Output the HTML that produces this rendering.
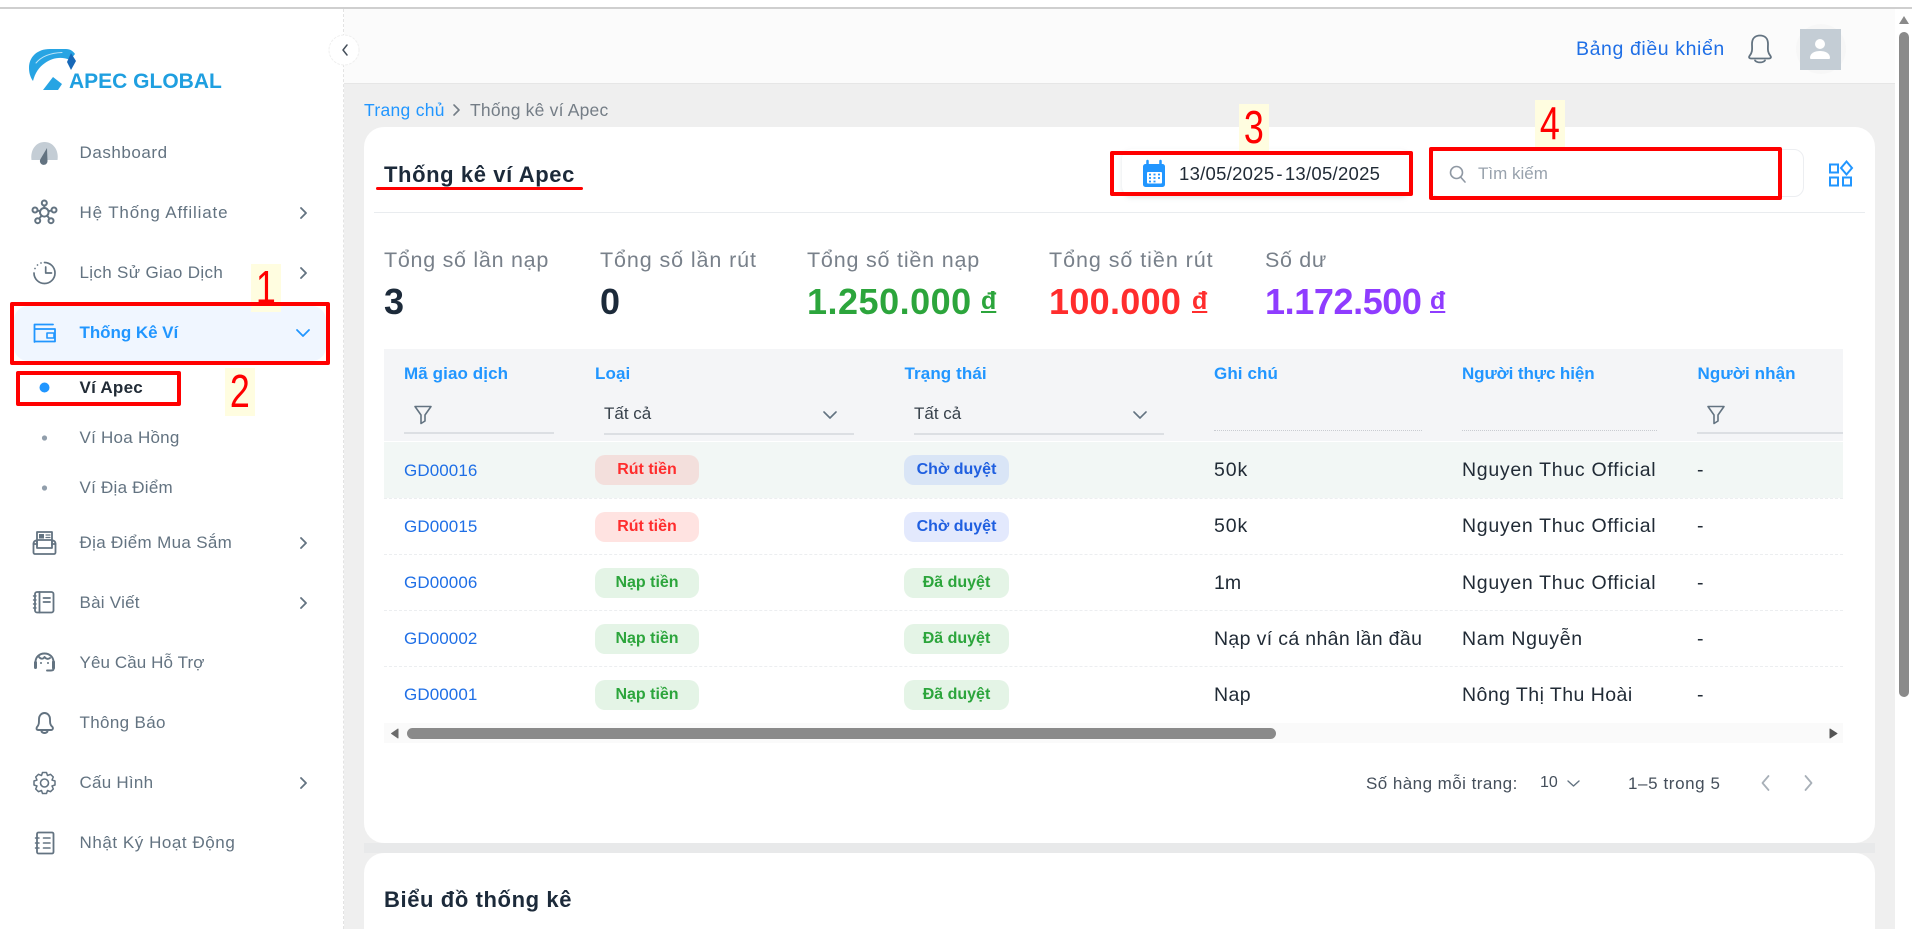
<!DOCTYPE html>
<html lang="vi"><head><meta charset="utf-8"><title>Thống kê ví Apec</title>
<style>
html,body{margin:0;padding:0;width:1912px;height:929px;overflow:hidden;background:#fff;font-family:"Liberation Sans","DejaVu Sans",sans-serif}
.a{position:absolute}
.t{position:absolute;white-space:nowrap;line-height:24px;height:24px}
.nav{font-size:17px;color:#637381;letter-spacing:.25px}
.lb{font-size:21.5px;color:#78808a;letter-spacing:.65px}
.val{font-size:36px;font-weight:700;letter-spacing:.3px;line-height:44px;height:44px}
.cur{font-size:25px;font-weight:700;text-decoration:underline;line-height:30px;height:30px}
.th{font-size:17px;font-weight:700;color:#2196ff;letter-spacing:.1px}
.gd{font-size:17px;color:#1f6fe6;letter-spacing:.1px}
.c{font-size:19.5px;color:#212b36;letter-spacing:.4px}
.bd{position:absolute;height:30px;border-radius:10px;font-size:16px;font-weight:700;line-height:30px;text-align:center;white-space:nowrap}
.r{background:#ffe3e1;color:#ff2d2d}.b{background:#e3e9fd;color:#1f5fe0}.g{background:#e4f4e6;color:#2ca53c}
.ln{position:absolute;height:0;border-top:2px solid #dcdfe3}
.dot{position:absolute;height:0;border-top:1px dotted #c9ccd1}
.n{position:absolute;width:30px;height:48px;background:#fffde0;color:#f00;font-size:46px;line-height:46px;text-align:center}
.n span{display:inline-block;transform:scaleX(.78)}
.rect{position:absolute;box-sizing:border-box;border:4px solid #f00;border-radius:2px}
.sep{position:absolute;left:384px;width:1459px;border-top:1px dashed #eceef0}
</style></head><body>
<!-- base -->
<div class="a" style="left:0;top:7px;width:1912px;height:2px;background:#cfcfcf"></div>
<div class="a" style="left:344px;top:9px;width:1551px;height:920px;background:#efefef"></div>
<div class="a" style="left:344px;top:9px;width:1551px;height:74px;background:#fbfbfb;border-bottom:1px solid #e6e6e6"></div>
<div class="a" style="left:343px;top:9px;height:920px;border-left:1px dashed #e3e3e3"></div>
<div class="a" style="left:364px;top:843px;width:1511px;height:10px;background:#e8e9ea"></div>

<!-- sidebar -->
<div class="a" style="left:14px;top:306px;width:312px;height:55px;background:#f0f6ff;border-radius:14px"></div>
<div class="t" style="left:69px;top:70px;font-size:21px;font-weight:700;color:#1f9fe0">APEC GLOBAL</div>
<div class="t nav" style="left:79.5px;top:141px;letter-spacing:.55px">Dashboard</div>
<div class="t nav" style="left:79.5px;top:201px;letter-spacing:.85px">Hệ Thống Affiliate</div>
<div class="t nav" style="left:79.5px;top:261px;letter-spacing:.33px">Lịch Sử Giao Dịch</div>
<div class="t nav" style="left:79.5px;top:321px;color:#2196ff;font-weight:700;letter-spacing:-.05px">Thống Kê Ví</div>
<div class="t nav" style="left:79.5px;top:376px;color:#212b36;font-weight:700">Ví Apec</div>
<div class="t nav" style="left:79.5px;top:426px">Ví Hoa Hồng</div>
<div class="t nav" style="left:79.5px;top:476px">Ví Địa Điểm</div>
<div class="t nav" style="left:79.5px;top:531px;letter-spacing:.33px">Địa Điểm Mua Sắm</div>
<div class="t nav" style="left:79.5px;top:591px">Bài Viết</div>
<div class="t nav" style="left:79.5px;top:651px;letter-spacing:.1px">Yêu Cầu Hỗ Trợ</div>
<div class="t nav" style="left:79.5px;top:711px;letter-spacing:.35px">Thông Báo</div>
<div class="t nav" style="left:79.5px;top:771px">Cấu Hình</div>
<div class="t nav" style="left:79.5px;top:831px;letter-spacing:.55px">Nhật Ký Hoạt Động</div>

<!-- header -->
<div class="t" style="left:1576px;top:37px;font-size:19.5px;color:#1f6fe6;letter-spacing:.6px">Bảng điều khiển</div>
<div class="a" style="left:1796px;top:24px;width:50px;height:50px;border-radius:50%;background:#f7f7f7"></div>
<div class="a" style="left:1800px;top:29px;width:41px;height:41px;background:#c4cdd5"></div>

<!-- breadcrumb -->
<div class="t" style="left:364px;top:98px;font-size:17.5px;color:#2196ff;letter-spacing:.3px">Trang chủ</div>
<div class="t" style="left:470px;top:98px;font-size:17.5px;color:#747d86;letter-spacing:.2px">Thống kê ví Apec</div>

<!-- card 1 -->
<div class="a" style="left:364px;top:127px;width:1511px;height:716px;background:#fff;border-radius:20px"></div>
<div class="a" style="left:364px;top:853px;width:1511px;height:76px;background:#fff;border-radius:20px 20px 0 0"></div>
<div class="t" style="left:384px;top:163px;font-size:22px;font-weight:700;color:#1c2a3a;letter-spacing:.6px">Thống kê ví Apec</div>
<div class="a" style="left:376px;top:187px;width:207px;height:3px;background:#f00;border-radius:2px"></div>
<div class="a" style="left:374px;top:212px;width:1491px;height:1px;background:#e9ecef"></div>

<div class="a" style="left:1122px;top:149px;width:288px;height:47px;background:#fff;border-radius:10px;box-shadow:0 2px 5px rgba(145,158,171,.25)"></div>
<div class="t" style="left:1179px;top:162px;font-size:18.5px;color:#212b36;letter-spacing:.28px">13/05/2025<span style="margin:0 2px">-</span>13/05/2025</div>
<div class="a" style="left:1429px;top:149px;width:375px;height:48px;box-sizing:border-box;border:1px solid #eceef1;border-radius:10px"></div>
<div class="t" style="left:1478px;top:162px;font-size:17px;color:#98a2ad">Tìm kiếm</div>

<!-- stats -->
<div class="t lb" style="left:384px;top:248px;letter-spacing:.72px">Tổng số lần nạp</div>
<div class="t lb" style="left:600px;top:248px;letter-spacing:.9px">Tổng số lần rút</div>
<div class="t lb" style="left:807px;top:248px;letter-spacing:.8px">Tổng số tiền nạp</div>
<div class="t lb" style="left:1049px;top:248px;letter-spacing:.95px">Tổng số tiền rút</div>
<div class="t lb" style="left:1265px;top:248px">Số dư</div>
<div class="t val" style="left:384px;top:280px;color:#1c2a3a">3</div>
<div class="t val" style="left:600px;top:280px;color:#1c2a3a">0</div>
<div class="t val" style="left:807px;top:280px;color:#2ca53c;letter-spacing:.5px">1.250.000</div>
<div class="t cur" style="left:981px;top:286px;color:#2ca53c">đ</div>
<div class="t val" style="left:1049px;top:280px;color:#ff2d2d">100.000</div>
<div class="t cur" style="left:1192px;top:286px;color:#ff2d2d">đ</div>
<div class="t val" style="left:1265px;top:280px;color:#8f3cff;letter-spacing:-.4px">1.172.500</div>
<div class="t cur" style="left:1430px;top:286px;color:#8f3cff">đ</div>

<!-- table -->
<div class="a" style="left:384px;top:349px;width:1459px;height:92px;background:#f4f5f7"></div>
<div class="a" style="left:384px;top:442px;width:1459px;height:56px;background:#f2f7f5"></div>
<div class="sep" style="top:498px"></div><div class="sep" style="top:554px"></div><div class="sep" style="top:610px"></div><div class="sep" style="top:666px"></div>
<div class="t th" style="left:404px;top:362px">Mã giao dịch</div>
<div class="t th" style="left:595px;top:362px">Loại</div>
<div class="t th" style="left:904.5px;top:362px">Trạng thái</div>
<div class="t th" style="left:1214px;top:362px">Ghi chú</div>
<div class="t th" style="left:1462px;top:362px;letter-spacing:-.1px">Người thực hiện</div>
<div class="t th" style="left:1697.5px;top:362px">Người nhận</div>
<div class="t" style="left:604px;top:402px;font-size:17px;color:#37414b">Tất cả</div>
<div class="t" style="left:914px;top:402px;font-size:17px;color:#37414b">Tất cả</div>
<div class="ln" style="left:404px;top:432px;width:150px"></div>
<div class="ln" style="left:604px;top:433px;width:250px"></div>
<div class="ln" style="left:914px;top:433px;width:250px"></div>
<div class="dot" style="left:1214px;top:430px;width:208px"></div>
<div class="dot" style="left:1462px;top:430px;width:195px"></div>
<div class="ln" style="left:1697px;top:432px;width:146px"></div>

<div class="t gd" style="left:404px;top:459px">GD00016</div>
<div class="t gd" style="left:404px;top:515px">GD00015</div>
<div class="t gd" style="left:404px;top:571px">GD00006</div>
<div class="t gd" style="left:404px;top:627px">GD00002</div>
<div class="t gd" style="left:404px;top:683px">GD00001</div>

<div class="bd" style="left:595px;top:455px;width:104px;background:#f3dfdc;color:#ff2d2d">Rút tiền</div>
<div class="bd r" style="left:595px;top:512px;width:104px">Rút tiền</div>
<div class="bd g" style="left:595px;top:568px;width:104px">Nạp tiền</div>
<div class="bd g" style="left:595px;top:624px;width:104px">Nạp tiền</div>
<div class="bd g" style="left:595px;top:680px;width:104px">Nạp tiền</div>
<div class="bd" style="left:904px;top:455px;width:105px;background:#d9e5f6;color:#1f5fe0">Chờ duyệt</div>
<div class="bd b" style="left:904px;top:512px;width:105px">Chờ duyệt</div>
<div class="bd g" style="left:904px;top:568px;width:105px">Đã duyệt</div>
<div class="bd g" style="left:904px;top:624px;width:105px">Đã duyệt</div>
<div class="bd g" style="left:904px;top:680px;width:105px">Đã duyệt</div>

<div class="t c" style="left:1214px;top:458px;letter-spacing:.9px">50k</div>
<div class="t c" style="left:1214px;top:514px;letter-spacing:.9px">50k</div>
<div class="t c" style="left:1214px;top:571px;letter-spacing:0">1m</div>
<div class="t c" style="left:1214px;top:627px;letter-spacing:.35px">Nạp ví cá nhân lần đầu</div>
<div class="t c" style="left:1214px;top:683px">Nap</div>
<div class="t c" style="left:1462px;top:458px;letter-spacing:.7px">Nguyen Thuc Official</div>
<div class="t c" style="left:1462px;top:514px;letter-spacing:.7px">Nguyen Thuc Official</div>
<div class="t c" style="left:1462px;top:571px;letter-spacing:.7px">Nguyen Thuc Official</div>
<div class="t c" style="left:1462px;top:627px;letter-spacing:.7px">Nam Nguyễn</div>
<div class="t c" style="left:1462px;top:683px;letter-spacing:.45px">Nông Thị Thu Hoài</div>
<div class="t c" style="left:1697px;top:458px">-</div>
<div class="t c" style="left:1697px;top:514px">-</div>
<div class="t c" style="left:1697px;top:571px">-</div>
<div class="t c" style="left:1697px;top:627px">-</div>
<div class="t c" style="left:1697px;top:683px">-</div>

<!-- table scrollbar -->
<div class="a" style="left:384px;top:723px;width:1459px;height:20px;background:#fafafa"></div>
<div class="a" style="left:407px;top:728px;width:869px;height:11px;background:#8a8a8a;border-radius:6px"></div>

<!-- pagination -->
<div class="t" style="left:1366px;top:772px;font-size:17px;color:#454f5b;letter-spacing:.45px">Số hàng mỗi trang:</div>
<div class="t" style="left:1540px;top:771px;font-size:16px;color:#454f5b">10</div>
<div class="t" style="left:1628px;top:772px;font-size:17px;color:#454f5b;letter-spacing:.6px">1–5 trong 5</div>

<!-- card 2 -->
<div class="t" style="left:384px;top:888px;font-size:22px;font-weight:700;color:#1c2a3a;letter-spacing:.6px">Biểu đồ thống kê</div>

<!-- window scrollbar -->
<div class="a" style="left:1899px;top:32px;width:10px;height:665px;background:#8a8a8a;border-radius:5px"></div>

<!-- icons -->
<svg class="a" style="left:0;top:0" width="1912" height="929" viewBox="0 0 1912 929" fill="none" stroke-linecap="round" stroke-linejoin="round">
 <!-- logo -->
 <path d="M29 68C29 57 37 49 50 49L66 49C70 49 73 51 75 54L70 60C61 56 52 58 45 63C39 67 35 73 33 81C30 77 29 72 29 68Z" fill="#27a4e3"/>
 <path d="M36 63C41 57 49 53 62 52.500" stroke="#bfe4f7" stroke-width="1"/>
 <path d="M71 53L76 61L71 70L67 62Z" fill="#1768b8"/>
 <path d="M43 90L53 77L62 84L58 90Z" fill="#27a4e3"/>
 <!-- dashboard -->
 <path d="M31.500 160C30 150 36 142 44.500 142C53 142 59 150 57.500 160Z" fill="#c4cdd5"/>
 <path d="M47 148L40.500 159A3.800 3.800 0 1 0 47.500 161Z" fill="#637381"/>
 <!-- affiliate -->
 <g stroke="#637381" stroke-width="2">
  <circle cx="44.300" cy="212.300" r="4.300"/><circle cx="44.300" cy="203" r="2.500"/><circle cx="35" cy="210" r="2.500"/><circle cx="54" cy="210" r="2.500"/><circle cx="37.700" cy="220.700" r="2.500"/><circle cx="51" cy="220.700" r="2.500"/>
  <path d="M44.300 205.500V208M37.500 210.500L40 211.200M51.500 210.500L48.600 211.200M39.200 218.700L41.500 215.700M49.500 218.700L47.200 215.700"/>
 </g>
 <!-- clock -->
 <path d="M44.500 262.500A10.500 10.500 0 1 1 34 273" stroke="#637381" stroke-width="1.700"/>
 <path d="M35 268.500V268.500M37.500 265V265M41 263V263" stroke="#637381" stroke-width="1.700"/>
 <path d="M45.700 267V273H51.500" stroke="#637381" stroke-width="1.700"/>
 <!-- wallet -->
 <path d="M34.500 342V324.500H53M34.500 329H55V341.500H34.500" stroke="#2196ff" stroke-width="1.800"/>
 <rect x="47" y="333" width="7" height="5" stroke="#2196ff" stroke-width="1.600"/>
 <path d="M297 330L303 336L309 330" stroke="#2196ff" stroke-width="1.800"/>
 <!-- dots -->
 <circle cx="44.500" cy="387.500" r="5" fill="#2196ff"/>
 <circle cx="44.500" cy="438" r="2.600" fill="#919eab"/>
 <circle cx="44.500" cy="488" r="2.600" fill="#919eab"/>
 <!-- shop -->
 <g stroke="#637381" stroke-width="1.800">
  <path d="M37 540V532H52V540"/><path d="M37 540H52V545"/><path d="M37 540V545"/>
  <path d="M36 544H33.500V552.500A1.500 1.500 0 0 0 35 554H54A1.500 1.500 0 0 0 55.500 552.500V544H53"/>
  <path d="M33.500 544C33.500 541 36 540 37 541V548H52V541C53 540 55.500 541 55.500 544"/>
 </g>
 <rect x="39" y="534" width="5" height="4.500" fill="#637381"/><path d="M46 535H50M46 537.500H50" stroke="#637381" stroke-width="1.200"/>
 <!-- notebook -->
 <g stroke="#637381" stroke-width="1.800">
  <rect x="35" y="592" width="18.500" height="20.500" rx="2"/><path d="M39.500 592V612.500M43.500 598H50M43.500 602H50"/>
  <path d="M33.500 596H36M33.500 600H36M33.500 604H36M33.500 608H36" stroke-width="1.400"/>
 </g>
 <!-- headset -->
 <g stroke="#637381" stroke-width="1.900">
  <path d="M35.500 667V662C35.500 657 39.500 653.500 44.500 653.500C49.500 653.500 53.500 657 53.500 662V669C53.500 670 52.500 670.500 51 670.500H47"/>
  <path d="M39 657C41 659.500 43.500 659 44.500 657C46 659 48 659.500 50 658"/>
  <path d="M35.500 662.500V667.500M53.500 662V668" stroke-width="3"/>
 </g>
 <circle cx="41" cy="663" r="1" fill="#637381"/><circle cx="48" cy="663" r="1" fill="#637381"/>
 <!-- bell sidebar -->
 <path d="M37 727C39 725 39 723 39 719A5.500 6 0 0 1 50 719C50 723 50 725 52.500 727C53.500 728.500 52.500 730 51 730H38.500C36.500 730 36 728.500 37 727Z" stroke="#637381" stroke-width="1.900"/>
 <path d="M41.500 731.500C43 733.500 46 733.500 47.500 731.500" stroke="#637381" stroke-width="1.900"/>
 <!-- gear -->
 <circle cx="44.500" cy="783" r="4" stroke="#637381" stroke-width="1.600"/>
 <path d="M42.500 772.500H46.500L47.500 775.500L50.500 774.300L53.300 777L52 780L55 781V785L52 786L53.300 789L50.500 791.700L47.500 790.500L46.500 793.500H42.500L41.500 790.500L38.500 791.700L35.700 789L37 786L34 785V781L37 780L35.700 777L38.500 774.300L41.500 775.500Z" stroke="#637381" stroke-width="1.500"/>
 <!-- log -->
 <g stroke="#637381" stroke-width="1.800">
  <rect x="37" y="832.500" width="16.500" height="21" rx="1.500"/><path d="M43.500 838H50M43.500 843H50M43.500 848H50" stroke-width="1.600"/>
  <path d="M35.500 838H39M35.500 843H39M35.500 848H39" stroke-width="1.500"/>
 </g>
 <!-- nav chevrons -->
 <g stroke="#637381" stroke-width="1.800">
  <path d="M301 208L306 213L301 218M301 268L306 273L301 278M301 538L306 543L301 548M301 598L306 603L301 608M301 778L306 783L301 788"/>
 </g>
 <!-- collapse -->
 <circle cx="344" cy="50" r="15" fill="#fff" stroke="#efefef" stroke-dasharray="2 2"/>
 <path d="M347 45L343 50L347 55" stroke="#454f5b" stroke-width="1.500"/>
 <!-- header bell -->
 <path d="M1749.500 56C1753 52 1752 48 1752 44C1752 38 1755.500 35.500 1760 35.500C1764.500 35.500 1768 38 1768 44C1768 48 1767 52 1770.500 56C1771.500 57.500 1770.500 58.500 1769 58.500H1751C1749.500 58.500 1748.500 57.500 1749.500 56Z" stroke="#637381" stroke-width="1.800"/>
 <path d="M1755 60.500C1757 63 1763 63 1765 60.500" stroke="#637381" stroke-width="1.800"/>
 <!-- avatar -->
 <circle cx="1820" cy="44" r="5" fill="#fff"/><path d="M1810 58C1810 53 1815 51 1820 51C1825 51 1830 53 1830 58C1830 59 1829 59 1828 59H1812C1811 59 1810 59 1810 58Z" fill="#fff"/>
 <!-- breadcrumb chevron -->
 <path d="M454 105L459 110L454 115" stroke="#747d86" stroke-width="1.600"/>
 <!-- calendar -->
 <path d="M1147.500 165V161M1160.500 165V161" stroke="#2196ff" stroke-width="2.500"/>
 <rect x="1143" y="164" width="22" height="23" rx="2.500" fill="#2196ff"/>
 <rect x="1147" y="172" width="15" height="11.500" rx="1" fill="#fff"/>
 <path d="M1149 174.500H1151M1153.500 174.500H1155.500M1158 174.500H1160M1149 178H1151M1153.500 178H1155.500M1158 178H1160M1149 181.500H1151M1153.500 181.500H1155.500" stroke="#2196ff" stroke-width="1.800" stroke-linecap="butt"/>
 <!-- search -->
 <circle cx="1456.500" cy="172.500" r="6" stroke="#8f98a3" stroke-width="1.600"/><path d="M1461 177.500L1465 182" stroke="#8f98a3" stroke-width="1.600"/>
 <!-- grid -->
 <g stroke="#2196ff" stroke-width="2" stroke-linejoin="miter">
  <rect x="1830" y="164.500" width="8" height="8"/><rect x="1830" y="177.500" width="8" height="8"/><rect x="1843" y="177.500" width="8" height="8"/>
  <path d="M1846.500 161.500L1852 168L1846.500 174.500L1841 168Z"/>
 </g>
 <!-- filter -->
 <path d="M415 406.500H431L425 415V421L421 423.500V415Z" stroke="#637381" stroke-width="1.600"/>
 <path d="M1708 406.500H1724L1718 415V421L1714 423.500V415Z" stroke="#637381" stroke-width="1.600"/>
 <!-- select chevrons -->
 <path d="M824 412L830 418L836 412M1134 412L1140 418L1146 412" stroke="#637381" stroke-width="1.600"/>
 <!-- table scroll arrows -->
 <path d="M398 729V738L391.500 733.500Z" fill="#6b6b6b" stroke="#6b6b6b"/>
 <path d="M1830 729V738L1837 733.500Z" fill="#555" stroke="#555"/>
 <!-- pagination -->
 <path d="M1568 781L1573.500 786L1579 781" stroke="#637381" stroke-width="1.400"/>
 <path d="M1768.500 776L1762.500 783L1768.500 790" stroke="#a8b0b8" stroke-width="1.800"/>
 <path d="M1805.500 776L1811.500 783L1805.500 790" stroke="#a8b0b8" stroke-width="1.800"/>
 <!-- window scrollbar arrow -->
 <path d="M1904 16L1909 24H1899Z" fill="#8a8a8a"/>
</svg>

<!-- annotations -->
<div class="n" style="left:251px;top:264px"><span>1</span></div>
<div class="n" style="left:225px;top:368px"><span>2</span></div>
<div class="n" style="left:1239px;top:104px"><span>3</span></div>
<div class="n" style="left:1535px;top:100px"><span>4</span></div>
<div class="rect" style="left:10px;top:302px;width:320px;height:63px"></div>
<div class="rect" style="left:16px;top:371px;width:165px;height:35px"></div>
<div class="rect" style="left:1110px;top:151px;width:303px;height:45px"></div>
<div class="rect" style="left:1429px;top:147px;width:353px;height:53px"></div>
</body></html>
